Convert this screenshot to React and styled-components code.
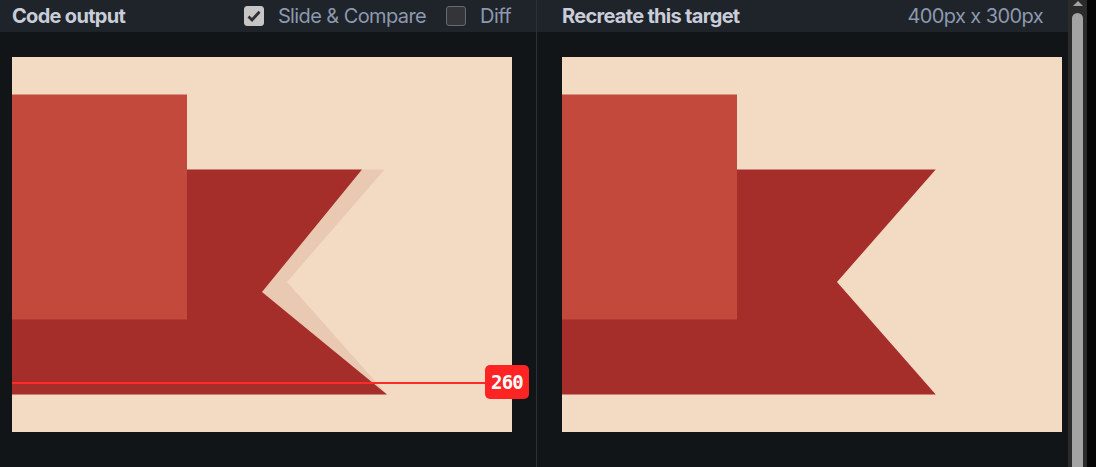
import React from "react";
import styled, { createGlobalStyle } from "styled-components";

const GlobalStyle = createGlobalStyle`
    html, body {
        margin: 0;
        padding: 0;
        background: #121518;
        overflow: hidden;
    }
    body {
        font-family: "Inter", "Liberation Sans", sans-serif;
    }
`;

const Page = styled.div`
    display: flex;
    width: 1096px;
    height: 467px;
    overflow: hidden;
    background: #121518;
`;

const Panel = styled.div`
    display: flex;
    flex-direction: column;
    flex: none;
    width: ${(props) => props.width}px;
    border-right: ${(props) => (props.divider ? "1px solid #2a3139" : "none")};
`;

const Header = styled.div`
    display: flex;
    align-items: center;
    height: 32px;
    padding: 0 ${(props) => props.padRight}px 0 ${(props) => props.padLeft}px;
    background: #1f232a;
`;

const Title = styled.div`
    color: #c9cdd9;
    font-weight: 700;
    font-size: 20px;
    letter-spacing: -0.035em;
    margin-right: auto;
`;

const Option = styled.label`
    display: flex;
    align-items: center;
    gap: 14px;
    margin-left: 20px;
    color: #8d99ae;
    font-size: 20px;
    letter-spacing: -0.03em;
`;

const Box = styled.span`
    display: flex;
    align-items: center;
    justify-content: center;
    width: 20px;
    height: 20px;
    border-radius: 3px;
    box-sizing: border-box;
    background: ${(props) => (props.checked ? "#c6c6c6" : "#333538")};
    border: 1px solid ${(props) => (props.checked ? "#c6c6c6" : "#66696e")};
`;

const Meta = styled.div`
    color: #8d99ae;
    font-size: 20px;
    letter-spacing: -0.03em;
`;

const Body = styled.div`
    padding: 25px ${(props) => props.padRight}px 0 ${(props) => props.padLeft}px;
`;

const Canvas = styled.div`
    position: relative;
    width: 500px;
    height: 375px;
    background: #f2dbc2;

    svg {
        display: block;
    }
`;

const Guide = styled.div`
    position: absolute;
    left: 0;
    top: 325px;
    width: 476px;
    height: 2px;
    background: #ff2a2a;
`;

const Badge = styled.div`
    position: absolute;
    left: 473px;
    top: 308px;
    width: 44px;
    height: 34px;
    border-radius: 5px;
    background: #ff2424;
    color: #ffffff;
    font-family: "DejaVu Sans Mono", "Liberation Mono", monospace;
    font-weight: 700;
    font-size: 19px;
    display: flex;
    align-items: center;
    justify-content: center;
    letter-spacing: -0.04em;
`;

const Scrollbar = styled.div`
    position: relative;
    flex: none;
    width: 19px;
    overflow: hidden;
    background: #2b2b2b;

    &::before {
        content: "";
        position: absolute;
        left: 5px;
        top: 1px;
        border-left: 5px solid transparent;
        border-right: 5px solid transparent;
        border-bottom: 5px solid #a3a3a3;
    }
`;

const Thumb = styled.div`
    margin: 13px 0 0 4px;
    width: 11px;
    height: 480px;
    border-radius: 6px;
    background: #a3a3a3;
`;

const Edge = styled.div`
    flex: 1;
    background: #050505;
`;

function Check() {
    return (
        <svg width="14" height="12" viewBox="0 0 14 12">
            <path d="M1.5 6.5 L5 10 L12.5 1.8" fill="none" stroke="#2f3136" strokeWidth="2.8" />
        </svg>
    );
}

function Drawing({ output }) {
    return (
        <svg width="500" height="375" viewBox="0 0 400 300">
            {output && <polygon points="0,90 298,90 220,180 300,270 0,270" fill="#e9c9b1" />}
            <polygon
                points={output ? "0,90 280,90 200,188 300,270 0,270" : "0,90 299,90 220,180 299,270 0,270"}
                fill="#a52e2b"
            />
            <rect x="0" y="30" width="140" height="180" fill="#c3493d" />
        </svg>
    );
}

export default function App() {
    return (
        <Page>
            <GlobalStyle />
            <Panel width={536} divider>
                <Header padLeft={12} padRight={25}>
                    <Title>Code output</Title>
                    <Option>
                        <Box checked>
                            <Check />
                        </Box>
                        Slide &amp; Compare
                    </Option>
                    <Option>
                        <Box />
                        Diff
                    </Option>
                </Header>
                <Body padLeft={12} padRight={24}>
                    <Canvas>
                        <Drawing output />
                        <Guide />
                        <Badge>260</Badge>
                    </Canvas>
                </Body>
            </Panel>
            <Panel width={531}>
                <Header padLeft={25} padRight={25}>
                    <Title>Recreate this target</Title>
                    <Meta>400px x 300px</Meta>
                </Header>
                <Body padLeft={25} padRight={6}>
                    <Canvas>
                        <Drawing />
                    </Canvas>
                </Body>
            </Panel>
            <Scrollbar>
                <Thumb />
            </Scrollbar>
            <Edge />
        </Page>
    );
}
